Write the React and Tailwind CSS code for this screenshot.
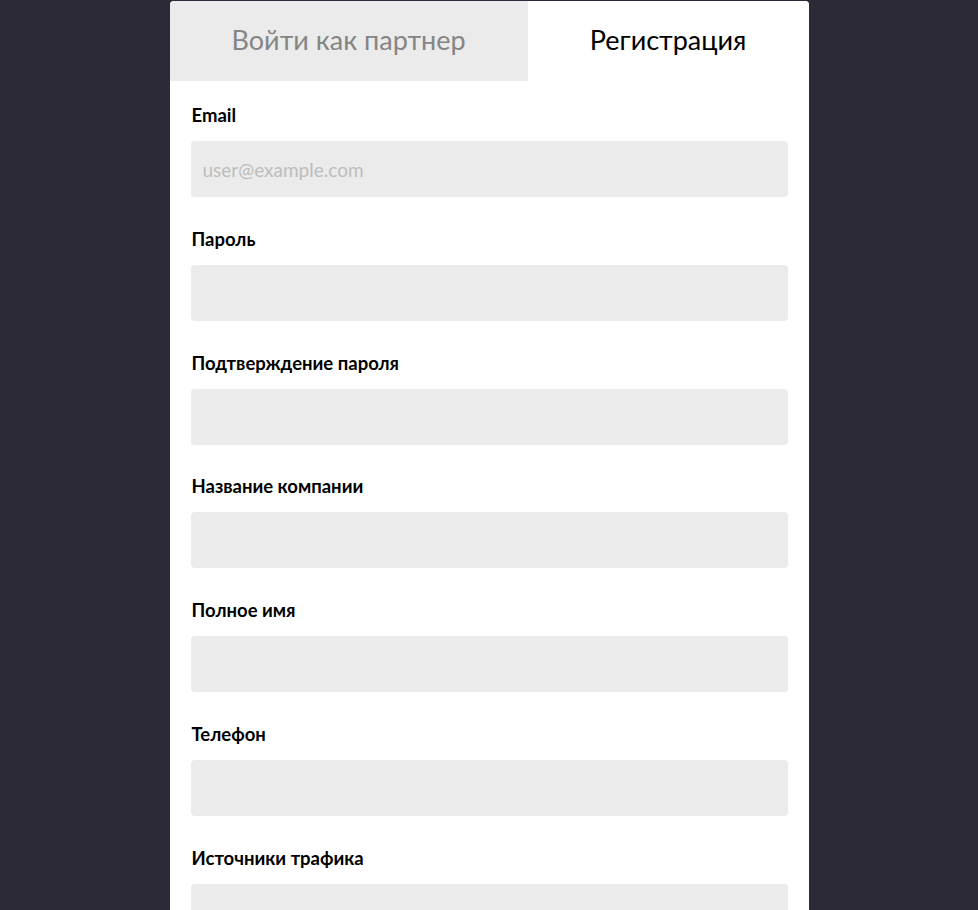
import { useState } from 'react'

const fields = [
  { label: 'Email', placeholder: 'user@example.com', type: 'email' },
  { label: 'Пароль', placeholder: '', type: 'password' },
  { label: 'Подтверждение пароля', placeholder: '', type: 'password' },
  { label: 'Название компании', placeholder: '', type: 'text' },
  { label: 'Полное имя', placeholder: '', type: 'text' },
  { label: 'Телефон', placeholder: '', type: 'tel' },
  { label: 'Источники трафика', placeholder: '', type: 'text' },
]

export default function App() {
  const [tab, setTab] = useState('register')

  return (
    <div className="min-h-screen bg-[#2c2a36] flex justify-center pt-px font-['Lato',sans-serif] overflow-hidden h-[910px]">
      <div className="w-[639px] bg-white rounded-t-[4px] overflow-hidden self-start">
        <div className="flex h-20">
          <button
            onClick={() => setTab('login')}
            className={`flex-auto flex items-center justify-center text-[27px] pb-px ${tab === 'login' ? 'bg-white text-black' : 'bg-[#ebebeb] text-[#858585]'}`}
          >
            Войти как партнер
          </button>
          <button
            onClick={() => setTab('register')}
            className={`flex-auto flex items-center justify-center text-[27px] pb-px ${tab === 'register' ? 'bg-white text-black' : 'bg-[#ebebeb] text-[#858585]'}`}
          >
            Регистрация
          </button>
        </div>

        <form className="px-[21px] pt-[22px] flex flex-col gap-[29.8px]">
          {fields.map((f) => (
            <div key={f.label} className="flex flex-col">
              <label className="pl-px text-[18.5px] leading-6 font-bold text-black mb-[14px]">{f.label}</label>
              <input
                type={f.type}
                placeholder={f.placeholder}
                className="h-14 w-full rounded-[4px] bg-[#ebebeb] px-3 text-[19px] text-black placeholder:text-[#bdbdbd] outline-none"
              />
            </div>
          ))}
        </form>
      </div>
    </div>
  )
}
